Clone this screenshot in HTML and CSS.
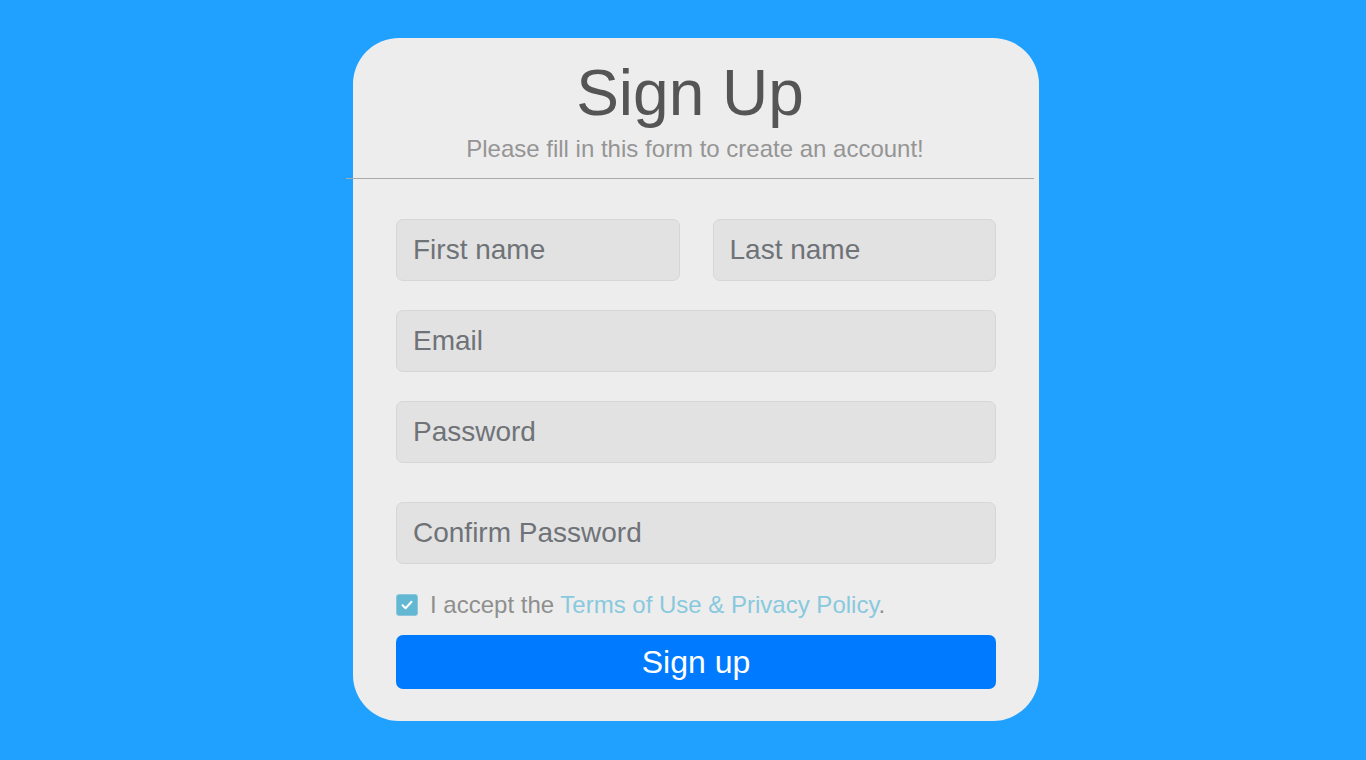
FILE: index.html
```html
<!DOCTYPE html>
<html lang="en">
<head>
<meta charset="utf-8">
<title>Sign Up</title>
<link rel="stylesheet" href="styles.css">
</head>
<body>
<main class="page">
  <form class="card">
    <div class="header">
      <h1 class="title">Sign Up</h1>
      <p class="subtitle">Please fill in this form to create an account!</p>
    </div>
    <div class="row two">
      <input class="field" type="text" placeholder="First name">
      <input class="field" type="text" placeholder="Last name">
    </div>
    <div class="row">
      <input class="field" type="email" placeholder="Email">
    </div>
    <div class="row">
      <input class="field" type="password" placeholder="Password">
    </div>
    <div class="row confirm">
      <input class="field" type="password" placeholder="Confirm Password">
    </div>
    <label class="accept">
      <span class="check">
        <svg viewBox="0 0 22 22" width="22" height="22"><path d="M6.5 11.2 L9.6 14.2 L15.5 7.8" fill="none" stroke="#fff" stroke-width="2" stroke-linecap="round" stroke-linejoin="round"/></svg>
      </span>
      <span class="accept-text">I accept the <a class="link" href="#">Terms of Use &amp; Privacy Policy</a>.</span>
    </label>
    <button class="submit" type="button">Sign up</button>
  </form>
</main>
</body>
</html>
```
FILE: styles.css
```css
* { box-sizing: border-box; }
html, body { margin: 0; padding: 0; }
body {
  background: #20a1ff;
  font-family: "Liberation Sans", Arial, sans-serif;
  height: 760px;
  overflow: hidden;
}
.page {
  display: flex;
  padding: 38px 0 0 353px;
}
.card {
  width: 686px;
  height: 683px;
  background: #ededed;
  border-radius: 46px;
  padding: 19px 43px 32px;
  display: flex;
  flex-direction: column;
}
.header {
  margin: 0 -38px 0 -50px;
  text-align: center;
  border-bottom: 1px solid #a9a9a9;
  padding-bottom: 15px;
}
.title {
  margin: 0;
  font-size: 64px;
  line-height: 72px;
  font-weight: normal;
  color: #555;
}
.subtitle {
  margin: 6px 0 0;
  padding-left: 10px;
  font-size: 24px;
  line-height: 28px;
  color: #959595;
}
.row {
  display: flex;
  margin-top: 29px;
}
.row.two {
  display: grid;
  grid-template-columns: 1fr 1fr;
  column-gap: 33px;
  margin-top: 40px;
}
.row.confirm { margin-top: 39px; }
.field {
  width: 100%;
  height: 62px;
  background: #e2e2e2;
  border: 1px solid #d6d6d6;
  border-radius: 7px;
  padding: 0 16px;
  font-family: "Liberation Sans", Arial, sans-serif;
  font-size: 28px;
  color: #495057;
  outline: none;
}
.field::placeholder { color: #6f7378; opacity: 1; }
.accept {
  display: flex;
  align-items: center;
  margin-top: 27px;
  height: 28px;
  font-size: 24px;
  color: #8f8f8f;
}
.check {
  width: 22px;
  height: 22px;
  border-radius: 3px;
  background: #62b7d2;
  border: 1px solid #8cc6d9;
  display: flex;
  margin-right: 12px;
}
.check svg { display: block; margin: -1px; }
.link {
  color: #89c9de;
  text-decoration: none;
}
.submit {
  margin-top: 16px;
  height: 54px;
  width: 100%;
  border: none;
  border-radius: 7px;
  background: #007bff;
  color: #fff;
  font-family: "Liberation Sans", Arial, sans-serif;
  font-size: 32px;
  padding: 0;
}
```
